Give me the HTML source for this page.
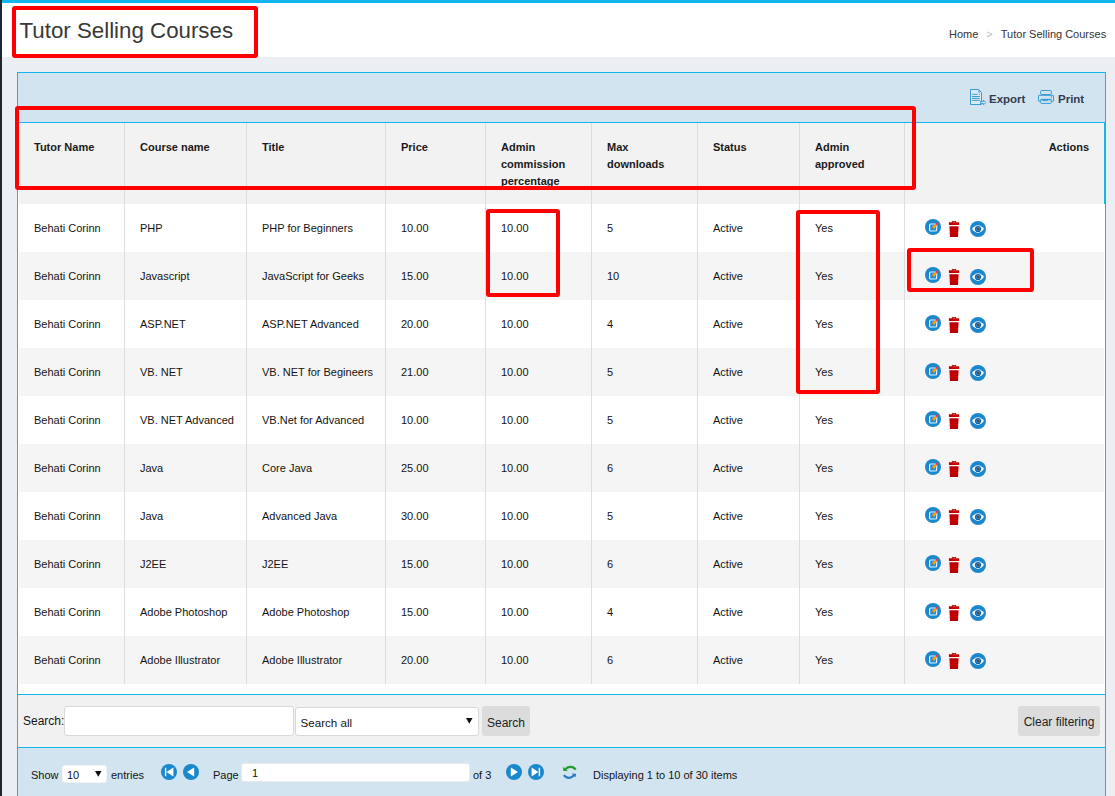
<!DOCTYPE html>
<html><head><meta charset="utf-8">
<style>
*{box-sizing:border-box;margin:0;padding:0}
html,body{width:1115px;height:796px;overflow:hidden}
body{position:relative;background:#ebeef3;font-family:"Liberation Sans",sans-serif;font-size:11px;color:#222}
.abs{position:absolute}
.vsep{width:1px;background:#dddddd}
.th{font-weight:bold;font-size:11px;line-height:17px;color:#1a1a1a;white-space:nowrap}
.td{font-size:11px;line-height:14px;color:#141414;white-space:nowrap}
.tb{font-weight:bold;font-size:11.5px;color:#353b50;line-height:14px;white-space:nowrap}
.inp{position:absolute;background:#fff;border:1px solid #d9d9d9;border-radius:3px}
.btn{position:absolute;background:#dcdcdc;border-radius:3px;font-size:11px;color:#222;text-align:center}
.lbl{position:absolute;font-size:11px;line-height:14px;color:#141414;white-space:nowrap}
.rb{border:4px solid #ff0000;border-radius:3px}

</style></head><body>
<div class="abs" style="left:0;top:0;width:2px;height:796px;background:#1f272c"></div>
<div class="abs" style="left:2px;top:0;width:1113px;height:3px;background:#12b6ec"></div>
<div class="abs" style="left:2px;top:3px;width:1113px;height:54px;background:#fff"></div>
<div class="abs" style="left:19.5px;top:18px;font-size:22.3px;line-height:26px;color:#383838;white-space:nowrap">Tutor Selling Courses</div>
<div class="abs" style="left:949px;top:27px;font-size:11px;line-height:14px;color:#333;white-space:nowrap">Home<span style="color:#bbb;padding:0 8px">&gt;</span>Tutor Selling Courses</div>
<div class="abs" style="left:17px;top:72px;width:1089px;height:724px;border:1px solid #12b6ec;border-bottom:none;background:#d2e4f0"></div>
<svg class="abs" style="left:966px;top:86px" width="24" height="22" viewBox="0 0 24 22"><g fill="none" stroke="#3a9ad6" stroke-width="1"><path d="M4.5 3.5 H12.4 L15.5 6.6 V18.5 H4.5 Z" fill="#dde9f2"/><circle cx="13.4" cy="5.4" r="0.9"/><path d="M6.1 8.3 H11.6 M6.1 10.5 H13.8 M6.1 12.4 H13.8 M6.1 14.4 H13.8"/><path d="M14.5 15.5 H17.5 V14.2 L19.8 16.5 L17.5 18.8 V17.5 H14.5 Z" fill="#dde9f2"/></g><circle cx="13.4" cy="8.3" r="0.6" fill="#3a9ad6"/></svg>
<div class="abs tb" style="left:989px;top:91.5px">Export</div>
<svg class="abs" style="left:1034px;top:86px" width="24" height="22" viewBox="0 0 24 22"><g fill="none" stroke="#3a9ad6" stroke-width="1"><rect x="6.6" y="4.5" width="10.7" height="4" rx="1"/><path d="M6.3 15.3 H5 Q4.5 15.3 4.5 14.8 V9.8 Q4.5 9.3 5 9.3 H19 Q19.5 9.3 19.5 9.8 V14.8 Q19.5 15.3 19 15.3 H17.6"/><rect x="6.6" y="13.4" width="10.7" height="4" rx="1"/><path d="M6.6 13.6 H17.3" stroke-width="1.4"/><path d="M8.5 14.6 H13.8"/></g><circle cx="17.4" cy="11" r="0.8" fill="#3a9ad6"/></svg>
<div class="abs tb" style="left:1058px;top:91.5px">Print</div>
<div class="abs" style="left:18px;top:122px;width:1087px;height:574px;background:#fff;border-top:1px solid #12b6ec"></div>
<div class="abs" style="left:1104px;top:122px;width:1px;height:82px;background:#12b6ec"></div>
<div class="abs" style="left:19px;top:123px;width:1085px;height:81px;background:#f2f2f2"></div>
<div class="abs vsep" style="left:124px;top:123px;height:561px"></div>
<div class="abs vsep" style="left:246px;top:123px;height:561px"></div>
<div class="abs vsep" style="left:385px;top:123px;height:561px"></div>
<div class="abs vsep" style="left:485px;top:123px;height:561px"></div>
<div class="abs vsep" style="left:591px;top:123px;height:561px"></div>
<div class="abs vsep" style="left:697px;top:123px;height:561px"></div>
<div class="abs vsep" style="left:799px;top:123px;height:561px"></div>
<div class="abs vsep" style="left:904px;top:123px;height:561px"></div>
<div class="abs th" style="left:34px;top:138.5px">Tutor Name</div>
<div class="abs th" style="left:140px;top:138.5px">Course name</div>
<div class="abs th" style="left:262px;top:138.5px">Title</div>
<div class="abs th" style="left:401px;top:138.5px">Price</div>
<div class="abs th" style="left:501px;top:138.5px">Admin<br>commission<br>percentage</div>
<div class="abs th" style="left:607px;top:138.5px">Max<br>downloads</div>
<div class="abs th" style="left:713px;top:138.5px">Status</div>
<div class="abs th" style="left:815px;top:138.5px">Admin<br>approved</div>
<div class="abs th" style="right:26px;top:138.5px">Actions</div>
<div class="abs" style="left:19px;top:204px;width:1085px;height:48px;background:#ffffff"></div>
<div class="abs td" style="left:34px;top:221px">Behati Corinn</div>
<div class="abs td" style="left:140px;top:221px">PHP</div>
<div class="abs td" style="left:262px;top:221px">PHP for Beginners</div>
<div class="abs td" style="left:401px;top:221px">10.00</div>
<div class="abs td" style="left:501px;top:221px">10.00</div>
<div class="abs td" style="left:607px;top:221px">5</div>
<div class="abs td" style="left:713px;top:221px">Active</div>
<div class="abs td" style="left:815px;top:221px">Yes</div>
<svg class="abs" style="left:925px;top:219px" width="16" height="16" viewBox="0 0 16 16"><circle cx="8" cy="8" r="8" fill="#1b88cb"/><rect x="4.6" y="5" width="7.1" height="7" rx="1.3" fill="#1f90dd" stroke="#e3f0f9" stroke-width="1.2"/><path d="M7.2 9.6 L11.4 5.4" stroke="#f7a21b" stroke-width="2.3"/><path d="M11.2 5.6 L12.8 4" stroke="#e43a4e" stroke-width="2.3"/><path d="M6.2 10.6 L7.6 8.6 L8.2 9.2 Z" fill="#203040"/></svg>
<svg class="abs" style="left:948px;top:221px" width="12" height="16" viewBox="0 0 12 16"><path d="M4 0 H8 V1.4 H4 Z M5 0.8 V1.3 H7 V0.8 Z" fill="#c00000" fill-rule="evenodd"/><rect x="0.9" y="1.3" width="10.3" height="2.6" rx="0.5" fill="#c00000"/><path d="M1.4 5.2 H10.6 L10 16 H2 Z" fill="#c00000"/></svg>
<svg class="abs" style="left:970px;top:221px" width="16" height="16" viewBox="0 0 16 16"><circle cx="8" cy="8" r="8" fill="#1b88cb"/><path d="M2 8 Q8 0.5 14 8 Q8 15.5 2 8 Z" fill="#fff"/><circle cx="8" cy="8" r="3.1" fill="#17609e"/><circle cx="8" cy="8" r="2" fill="#2a8fd4"/><circle cx="8" cy="7.9" r="1" fill="#5b2c1c"/></svg>
<div class="abs" style="left:19px;top:252px;width:1085px;height:48px;background:#f5f5f5"></div>
<div class="abs td" style="left:34px;top:269px">Behati Corinn</div>
<div class="abs td" style="left:140px;top:269px">Javascript</div>
<div class="abs td" style="left:262px;top:269px">JavaScript for Geeks</div>
<div class="abs td" style="left:401px;top:269px">15.00</div>
<div class="abs td" style="left:501px;top:269px">10.00</div>
<div class="abs td" style="left:607px;top:269px">10</div>
<div class="abs td" style="left:713px;top:269px">Active</div>
<div class="abs td" style="left:815px;top:269px">Yes</div>
<svg class="abs" style="left:925px;top:267px" width="16" height="16" viewBox="0 0 16 16"><circle cx="8" cy="8" r="8" fill="#1b88cb"/><rect x="4.6" y="5" width="7.1" height="7" rx="1.3" fill="#1f90dd" stroke="#e3f0f9" stroke-width="1.2"/><path d="M7.2 9.6 L11.4 5.4" stroke="#f7a21b" stroke-width="2.3"/><path d="M11.2 5.6 L12.8 4" stroke="#e43a4e" stroke-width="2.3"/><path d="M6.2 10.6 L7.6 8.6 L8.2 9.2 Z" fill="#203040"/></svg>
<svg class="abs" style="left:948px;top:269px" width="12" height="16" viewBox="0 0 12 16"><path d="M4 0 H8 V1.4 H4 Z M5 0.8 V1.3 H7 V0.8 Z" fill="#c00000" fill-rule="evenodd"/><rect x="0.9" y="1.3" width="10.3" height="2.6" rx="0.5" fill="#c00000"/><path d="M1.4 5.2 H10.6 L10 16 H2 Z" fill="#c00000"/></svg>
<svg class="abs" style="left:970px;top:269px" width="16" height="16" viewBox="0 0 16 16"><circle cx="8" cy="8" r="8" fill="#1b88cb"/><path d="M2 8 Q8 0.5 14 8 Q8 15.5 2 8 Z" fill="#fff"/><circle cx="8" cy="8" r="3.1" fill="#17609e"/><circle cx="8" cy="8" r="2" fill="#2a8fd4"/><circle cx="8" cy="7.9" r="1" fill="#5b2c1c"/></svg>
<div class="abs" style="left:19px;top:300px;width:1085px;height:48px;background:#ffffff"></div>
<div class="abs td" style="left:34px;top:317px">Behati Corinn</div>
<div class="abs td" style="left:140px;top:317px">ASP.NET</div>
<div class="abs td" style="left:262px;top:317px">ASP.NET Advanced</div>
<div class="abs td" style="left:401px;top:317px">20.00</div>
<div class="abs td" style="left:501px;top:317px">10.00</div>
<div class="abs td" style="left:607px;top:317px">4</div>
<div class="abs td" style="left:713px;top:317px">Active</div>
<div class="abs td" style="left:815px;top:317px">Yes</div>
<svg class="abs" style="left:925px;top:315px" width="16" height="16" viewBox="0 0 16 16"><circle cx="8" cy="8" r="8" fill="#1b88cb"/><rect x="4.6" y="5" width="7.1" height="7" rx="1.3" fill="#1f90dd" stroke="#e3f0f9" stroke-width="1.2"/><path d="M7.2 9.6 L11.4 5.4" stroke="#f7a21b" stroke-width="2.3"/><path d="M11.2 5.6 L12.8 4" stroke="#e43a4e" stroke-width="2.3"/><path d="M6.2 10.6 L7.6 8.6 L8.2 9.2 Z" fill="#203040"/></svg>
<svg class="abs" style="left:948px;top:317px" width="12" height="16" viewBox="0 0 12 16"><path d="M4 0 H8 V1.4 H4 Z M5 0.8 V1.3 H7 V0.8 Z" fill="#c00000" fill-rule="evenodd"/><rect x="0.9" y="1.3" width="10.3" height="2.6" rx="0.5" fill="#c00000"/><path d="M1.4 5.2 H10.6 L10 16 H2 Z" fill="#c00000"/></svg>
<svg class="abs" style="left:970px;top:317px" width="16" height="16" viewBox="0 0 16 16"><circle cx="8" cy="8" r="8" fill="#1b88cb"/><path d="M2 8 Q8 0.5 14 8 Q8 15.5 2 8 Z" fill="#fff"/><circle cx="8" cy="8" r="3.1" fill="#17609e"/><circle cx="8" cy="8" r="2" fill="#2a8fd4"/><circle cx="8" cy="7.9" r="1" fill="#5b2c1c"/></svg>
<div class="abs" style="left:19px;top:348px;width:1085px;height:48px;background:#f5f5f5"></div>
<div class="abs td" style="left:34px;top:365px">Behati Corinn</div>
<div class="abs td" style="left:140px;top:365px">VB. NET</div>
<div class="abs td" style="left:262px;top:365px">VB. NET for Begineers</div>
<div class="abs td" style="left:401px;top:365px">21.00</div>
<div class="abs td" style="left:501px;top:365px">10.00</div>
<div class="abs td" style="left:607px;top:365px">5</div>
<div class="abs td" style="left:713px;top:365px">Active</div>
<div class="abs td" style="left:815px;top:365px">Yes</div>
<svg class="abs" style="left:925px;top:363px" width="16" height="16" viewBox="0 0 16 16"><circle cx="8" cy="8" r="8" fill="#1b88cb"/><rect x="4.6" y="5" width="7.1" height="7" rx="1.3" fill="#1f90dd" stroke="#e3f0f9" stroke-width="1.2"/><path d="M7.2 9.6 L11.4 5.4" stroke="#f7a21b" stroke-width="2.3"/><path d="M11.2 5.6 L12.8 4" stroke="#e43a4e" stroke-width="2.3"/><path d="M6.2 10.6 L7.6 8.6 L8.2 9.2 Z" fill="#203040"/></svg>
<svg class="abs" style="left:948px;top:365px" width="12" height="16" viewBox="0 0 12 16"><path d="M4 0 H8 V1.4 H4 Z M5 0.8 V1.3 H7 V0.8 Z" fill="#c00000" fill-rule="evenodd"/><rect x="0.9" y="1.3" width="10.3" height="2.6" rx="0.5" fill="#c00000"/><path d="M1.4 5.2 H10.6 L10 16 H2 Z" fill="#c00000"/></svg>
<svg class="abs" style="left:970px;top:365px" width="16" height="16" viewBox="0 0 16 16"><circle cx="8" cy="8" r="8" fill="#1b88cb"/><path d="M2 8 Q8 0.5 14 8 Q8 15.5 2 8 Z" fill="#fff"/><circle cx="8" cy="8" r="3.1" fill="#17609e"/><circle cx="8" cy="8" r="2" fill="#2a8fd4"/><circle cx="8" cy="7.9" r="1" fill="#5b2c1c"/></svg>
<div class="abs" style="left:19px;top:396px;width:1085px;height:48px;background:#ffffff"></div>
<div class="abs td" style="left:34px;top:413px">Behati Corinn</div>
<div class="abs td" style="left:140px;top:413px">VB. NET Advanced</div>
<div class="abs td" style="left:262px;top:413px">VB.Net for Advanced</div>
<div class="abs td" style="left:401px;top:413px">10.00</div>
<div class="abs td" style="left:501px;top:413px">10.00</div>
<div class="abs td" style="left:607px;top:413px">5</div>
<div class="abs td" style="left:713px;top:413px">Active</div>
<div class="abs td" style="left:815px;top:413px">Yes</div>
<svg class="abs" style="left:925px;top:411px" width="16" height="16" viewBox="0 0 16 16"><circle cx="8" cy="8" r="8" fill="#1b88cb"/><rect x="4.6" y="5" width="7.1" height="7" rx="1.3" fill="#1f90dd" stroke="#e3f0f9" stroke-width="1.2"/><path d="M7.2 9.6 L11.4 5.4" stroke="#f7a21b" stroke-width="2.3"/><path d="M11.2 5.6 L12.8 4" stroke="#e43a4e" stroke-width="2.3"/><path d="M6.2 10.6 L7.6 8.6 L8.2 9.2 Z" fill="#203040"/></svg>
<svg class="abs" style="left:948px;top:413px" width="12" height="16" viewBox="0 0 12 16"><path d="M4 0 H8 V1.4 H4 Z M5 0.8 V1.3 H7 V0.8 Z" fill="#c00000" fill-rule="evenodd"/><rect x="0.9" y="1.3" width="10.3" height="2.6" rx="0.5" fill="#c00000"/><path d="M1.4 5.2 H10.6 L10 16 H2 Z" fill="#c00000"/></svg>
<svg class="abs" style="left:970px;top:413px" width="16" height="16" viewBox="0 0 16 16"><circle cx="8" cy="8" r="8" fill="#1b88cb"/><path d="M2 8 Q8 0.5 14 8 Q8 15.5 2 8 Z" fill="#fff"/><circle cx="8" cy="8" r="3.1" fill="#17609e"/><circle cx="8" cy="8" r="2" fill="#2a8fd4"/><circle cx="8" cy="7.9" r="1" fill="#5b2c1c"/></svg>
<div class="abs" style="left:19px;top:444px;width:1085px;height:48px;background:#f5f5f5"></div>
<div class="abs td" style="left:34px;top:461px">Behati Corinn</div>
<div class="abs td" style="left:140px;top:461px">Java</div>
<div class="abs td" style="left:262px;top:461px">Core Java</div>
<div class="abs td" style="left:401px;top:461px">25.00</div>
<div class="abs td" style="left:501px;top:461px">10.00</div>
<div class="abs td" style="left:607px;top:461px">6</div>
<div class="abs td" style="left:713px;top:461px">Active</div>
<div class="abs td" style="left:815px;top:461px">Yes</div>
<svg class="abs" style="left:925px;top:459px" width="16" height="16" viewBox="0 0 16 16"><circle cx="8" cy="8" r="8" fill="#1b88cb"/><rect x="4.6" y="5" width="7.1" height="7" rx="1.3" fill="#1f90dd" stroke="#e3f0f9" stroke-width="1.2"/><path d="M7.2 9.6 L11.4 5.4" stroke="#f7a21b" stroke-width="2.3"/><path d="M11.2 5.6 L12.8 4" stroke="#e43a4e" stroke-width="2.3"/><path d="M6.2 10.6 L7.6 8.6 L8.2 9.2 Z" fill="#203040"/></svg>
<svg class="abs" style="left:948px;top:461px" width="12" height="16" viewBox="0 0 12 16"><path d="M4 0 H8 V1.4 H4 Z M5 0.8 V1.3 H7 V0.8 Z" fill="#c00000" fill-rule="evenodd"/><rect x="0.9" y="1.3" width="10.3" height="2.6" rx="0.5" fill="#c00000"/><path d="M1.4 5.2 H10.6 L10 16 H2 Z" fill="#c00000"/></svg>
<svg class="abs" style="left:970px;top:461px" width="16" height="16" viewBox="0 0 16 16"><circle cx="8" cy="8" r="8" fill="#1b88cb"/><path d="M2 8 Q8 0.5 14 8 Q8 15.5 2 8 Z" fill="#fff"/><circle cx="8" cy="8" r="3.1" fill="#17609e"/><circle cx="8" cy="8" r="2" fill="#2a8fd4"/><circle cx="8" cy="7.9" r="1" fill="#5b2c1c"/></svg>
<div class="abs" style="left:19px;top:492px;width:1085px;height:48px;background:#ffffff"></div>
<div class="abs td" style="left:34px;top:509px">Behati Corinn</div>
<div class="abs td" style="left:140px;top:509px">Java</div>
<div class="abs td" style="left:262px;top:509px">Advanced Java</div>
<div class="abs td" style="left:401px;top:509px">30.00</div>
<div class="abs td" style="left:501px;top:509px">10.00</div>
<div class="abs td" style="left:607px;top:509px">5</div>
<div class="abs td" style="left:713px;top:509px">Active</div>
<div class="abs td" style="left:815px;top:509px">Yes</div>
<svg class="abs" style="left:925px;top:507px" width="16" height="16" viewBox="0 0 16 16"><circle cx="8" cy="8" r="8" fill="#1b88cb"/><rect x="4.6" y="5" width="7.1" height="7" rx="1.3" fill="#1f90dd" stroke="#e3f0f9" stroke-width="1.2"/><path d="M7.2 9.6 L11.4 5.4" stroke="#f7a21b" stroke-width="2.3"/><path d="M11.2 5.6 L12.8 4" stroke="#e43a4e" stroke-width="2.3"/><path d="M6.2 10.6 L7.6 8.6 L8.2 9.2 Z" fill="#203040"/></svg>
<svg class="abs" style="left:948px;top:509px" width="12" height="16" viewBox="0 0 12 16"><path d="M4 0 H8 V1.4 H4 Z M5 0.8 V1.3 H7 V0.8 Z" fill="#c00000" fill-rule="evenodd"/><rect x="0.9" y="1.3" width="10.3" height="2.6" rx="0.5" fill="#c00000"/><path d="M1.4 5.2 H10.6 L10 16 H2 Z" fill="#c00000"/></svg>
<svg class="abs" style="left:970px;top:509px" width="16" height="16" viewBox="0 0 16 16"><circle cx="8" cy="8" r="8" fill="#1b88cb"/><path d="M2 8 Q8 0.5 14 8 Q8 15.5 2 8 Z" fill="#fff"/><circle cx="8" cy="8" r="3.1" fill="#17609e"/><circle cx="8" cy="8" r="2" fill="#2a8fd4"/><circle cx="8" cy="7.9" r="1" fill="#5b2c1c"/></svg>
<div class="abs" style="left:19px;top:540px;width:1085px;height:48px;background:#f5f5f5"></div>
<div class="abs td" style="left:34px;top:557px">Behati Corinn</div>
<div class="abs td" style="left:140px;top:557px">J2EE</div>
<div class="abs td" style="left:262px;top:557px">J2EE</div>
<div class="abs td" style="left:401px;top:557px">15.00</div>
<div class="abs td" style="left:501px;top:557px">10.00</div>
<div class="abs td" style="left:607px;top:557px">6</div>
<div class="abs td" style="left:713px;top:557px">Active</div>
<div class="abs td" style="left:815px;top:557px">Yes</div>
<svg class="abs" style="left:925px;top:555px" width="16" height="16" viewBox="0 0 16 16"><circle cx="8" cy="8" r="8" fill="#1b88cb"/><rect x="4.6" y="5" width="7.1" height="7" rx="1.3" fill="#1f90dd" stroke="#e3f0f9" stroke-width="1.2"/><path d="M7.2 9.6 L11.4 5.4" stroke="#f7a21b" stroke-width="2.3"/><path d="M11.2 5.6 L12.8 4" stroke="#e43a4e" stroke-width="2.3"/><path d="M6.2 10.6 L7.6 8.6 L8.2 9.2 Z" fill="#203040"/></svg>
<svg class="abs" style="left:948px;top:557px" width="12" height="16" viewBox="0 0 12 16"><path d="M4 0 H8 V1.4 H4 Z M5 0.8 V1.3 H7 V0.8 Z" fill="#c00000" fill-rule="evenodd"/><rect x="0.9" y="1.3" width="10.3" height="2.6" rx="0.5" fill="#c00000"/><path d="M1.4 5.2 H10.6 L10 16 H2 Z" fill="#c00000"/></svg>
<svg class="abs" style="left:970px;top:557px" width="16" height="16" viewBox="0 0 16 16"><circle cx="8" cy="8" r="8" fill="#1b88cb"/><path d="M2 8 Q8 0.5 14 8 Q8 15.5 2 8 Z" fill="#fff"/><circle cx="8" cy="8" r="3.1" fill="#17609e"/><circle cx="8" cy="8" r="2" fill="#2a8fd4"/><circle cx="8" cy="7.9" r="1" fill="#5b2c1c"/></svg>
<div class="abs" style="left:19px;top:588px;width:1085px;height:48px;background:#ffffff"></div>
<div class="abs td" style="left:34px;top:605px">Behati Corinn</div>
<div class="abs td" style="left:140px;top:605px">Adobe Photoshop</div>
<div class="abs td" style="left:262px;top:605px">Adobe Photoshop</div>
<div class="abs td" style="left:401px;top:605px">15.00</div>
<div class="abs td" style="left:501px;top:605px">10.00</div>
<div class="abs td" style="left:607px;top:605px">4</div>
<div class="abs td" style="left:713px;top:605px">Active</div>
<div class="abs td" style="left:815px;top:605px">Yes</div>
<svg class="abs" style="left:925px;top:603px" width="16" height="16" viewBox="0 0 16 16"><circle cx="8" cy="8" r="8" fill="#1b88cb"/><rect x="4.6" y="5" width="7.1" height="7" rx="1.3" fill="#1f90dd" stroke="#e3f0f9" stroke-width="1.2"/><path d="M7.2 9.6 L11.4 5.4" stroke="#f7a21b" stroke-width="2.3"/><path d="M11.2 5.6 L12.8 4" stroke="#e43a4e" stroke-width="2.3"/><path d="M6.2 10.6 L7.6 8.6 L8.2 9.2 Z" fill="#203040"/></svg>
<svg class="abs" style="left:948px;top:605px" width="12" height="16" viewBox="0 0 12 16"><path d="M4 0 H8 V1.4 H4 Z M5 0.8 V1.3 H7 V0.8 Z" fill="#c00000" fill-rule="evenodd"/><rect x="0.9" y="1.3" width="10.3" height="2.6" rx="0.5" fill="#c00000"/><path d="M1.4 5.2 H10.6 L10 16 H2 Z" fill="#c00000"/></svg>
<svg class="abs" style="left:970px;top:605px" width="16" height="16" viewBox="0 0 16 16"><circle cx="8" cy="8" r="8" fill="#1b88cb"/><path d="M2 8 Q8 0.5 14 8 Q8 15.5 2 8 Z" fill="#fff"/><circle cx="8" cy="8" r="3.1" fill="#17609e"/><circle cx="8" cy="8" r="2" fill="#2a8fd4"/><circle cx="8" cy="7.9" r="1" fill="#5b2c1c"/></svg>
<div class="abs" style="left:19px;top:636px;width:1085px;height:48px;background:#f5f5f5"></div>
<div class="abs td" style="left:34px;top:653px">Behati Corinn</div>
<div class="abs td" style="left:140px;top:653px">Adobe Illustrator</div>
<div class="abs td" style="left:262px;top:653px">Adobe Illustrator</div>
<div class="abs td" style="left:401px;top:653px">20.00</div>
<div class="abs td" style="left:501px;top:653px">10.00</div>
<div class="abs td" style="left:607px;top:653px">6</div>
<div class="abs td" style="left:713px;top:653px">Active</div>
<div class="abs td" style="left:815px;top:653px">Yes</div>
<svg class="abs" style="left:925px;top:651px" width="16" height="16" viewBox="0 0 16 16"><circle cx="8" cy="8" r="8" fill="#1b88cb"/><rect x="4.6" y="5" width="7.1" height="7" rx="1.3" fill="#1f90dd" stroke="#e3f0f9" stroke-width="1.2"/><path d="M7.2 9.6 L11.4 5.4" stroke="#f7a21b" stroke-width="2.3"/><path d="M11.2 5.6 L12.8 4" stroke="#e43a4e" stroke-width="2.3"/><path d="M6.2 10.6 L7.6 8.6 L8.2 9.2 Z" fill="#203040"/></svg>
<svg class="abs" style="left:948px;top:653px" width="12" height="16" viewBox="0 0 12 16"><path d="M4 0 H8 V1.4 H4 Z M5 0.8 V1.3 H7 V0.8 Z" fill="#c00000" fill-rule="evenodd"/><rect x="0.9" y="1.3" width="10.3" height="2.6" rx="0.5" fill="#c00000"/><path d="M1.4 5.2 H10.6 L10 16 H2 Z" fill="#c00000"/></svg>
<svg class="abs" style="left:970px;top:653px" width="16" height="16" viewBox="0 0 16 16"><circle cx="8" cy="8" r="8" fill="#1b88cb"/><path d="M2 8 Q8 0.5 14 8 Q8 15.5 2 8 Z" fill="#fff"/><circle cx="8" cy="8" r="3.1" fill="#17609e"/><circle cx="8" cy="8" r="2" fill="#2a8fd4"/><circle cx="8" cy="7.9" r="1" fill="#5b2c1c"/></svg>
<div class="abs vsep" style="left:124px;top:123px;height:561px"></div>
<div class="abs vsep" style="left:246px;top:123px;height:561px"></div>
<div class="abs vsep" style="left:385px;top:123px;height:561px"></div>
<div class="abs vsep" style="left:485px;top:123px;height:561px"></div>
<div class="abs vsep" style="left:591px;top:123px;height:561px"></div>
<div class="abs vsep" style="left:697px;top:123px;height:561px"></div>
<div class="abs vsep" style="left:799px;top:123px;height:561px"></div>
<div class="abs vsep" style="left:904px;top:123px;height:561px"></div>
<div class="abs" style="left:18px;top:694px;width:1087px;height:54px;background:#f1f1f1;border-top:1px solid #12b6ec;border-bottom:1px solid #12b6ec"></div>
<div class="lbl" style="left:23px;top:713.5px;font-size:12px">Search:</div>
<div class="inp" style="left:63.5px;top:706px;width:230px;height:29.5px"></div>
<div class="inp" style="left:295px;top:706.5px;width:184px;height:29px"></div>
<div class="lbl" style="left:300.5px;top:715.8px;font-size:11.6px">Search all</div>
<svg class="abs" style="left:466px;top:718px" width="7" height="6" viewBox="0 0 7 6"><path d="M0 0 H6.5 L3.25 5.8 Z" fill="#111"/></svg>
<div class="btn" style="left:482px;top:706px;width:48px;height:29.5px;line-height:14px;padding-top:10px;font-size:12px">Search</div>
<div class="btn" style="left:1018px;top:706px;width:82px;height:30px;line-height:14px;padding-top:9px;font-size:12px">Clear filtering</div>
<div class="abs" style="left:18px;top:748px;width:1087px;height:48px;background:#d2e4f0"></div>
<div class="lbl" style="left:31px;top:768px">Show</div>
<div class="inp" style="left:62px;top:765px;width:45px;height:18px;border-color:#f4f4f4"></div>
<div class="lbl" style="left:67px;top:768px">10</div>
<svg class="abs" style="left:95px;top:771px" width="7" height="6" viewBox="0 0 7 6"><path d="M0 0 H6.5 L3.25 5.8 Z" fill="#111"/></svg>
<div class="lbl" style="left:111px;top:768px">entries</div>
<svg class="abs" style="left:161px;top:764px" width="16" height="16" viewBox="0 0 16 16"><circle cx="8" cy="8" r="8" fill="#1b88cb"/><rect x="3.9" y="3.8" width="1.4" height="8.4" fill="#fff"/><path d="M12.4 3.6 V12.4 L5.6 8 Z" fill="#fff"/></svg>
<svg class="abs" style="left:183px;top:764px" width="16" height="16" viewBox="0 0 16 16"><circle cx="8" cy="8" r="8" fill="#1b88cb"/><path d="M11.2 3.6 V12.4 L4 8 Z" fill="#fff"/></svg>
<div class="lbl" style="left:213px;top:768px">Page</div>
<div class="inp" style="left:240.5px;top:762.5px;width:229px;height:19px;border-color:#eaeaea"></div>
<div class="lbl" style="left:252px;top:766px">1</div>
<div class="lbl" style="left:473px;top:768px">of 3</div>
<svg class="abs" style="left:506px;top:764px" width="16" height="16" viewBox="0 0 16 16"><circle cx="8" cy="8" r="8" fill="#1b88cb"/><path d="M4.8 3.6 V12.4 L12 8 Z" fill="#fff"/></svg>
<svg class="abs" style="left:528px;top:764px" width="16" height="16" viewBox="0 0 16 16"><circle cx="8" cy="8" r="8" fill="#1b88cb"/><path d="M3.6 3.6 V12.4 L10.4 8 Z" fill="#fff"/><rect x="10.7" y="3.8" width="1.4" height="8.4" fill="#fff"/></svg>
<svg class="abs" style="left:558px;top:760px" width="24" height="24" viewBox="0 0 24 24"><path d="M17.6 9.6 A6.2 6.2 0 0 0 7.4 9.4" fill="none" stroke="#269c2a" stroke-width="2.2"/><path d="M5.4 6.8 L5.0 10.8 L9.8 11.2 Z" fill="#269c2a"/><path d="M5.8 15.2 A6.2 6.2 0 0 0 16.2 14.8" fill="none" stroke="#2a7cc6" stroke-width="2.2"/><path d="M13.8 13.4 L18.2 13.8 L17.4 17.6 Z" fill="#2a7cc6"/></svg>
<div class="lbl" style="left:593px;top:768px">Displaying 1 to 10 of 30 items</div>
<div class="abs rb" style="left:12px;top:6px;width:246px;height:52px"></div>
<div class="abs rb" style="left:15px;top:106px;width:901px;height:84px"></div>
<div class="abs rb" style="left:486px;top:209px;width:74px;height:88px"></div>
<div class="abs rb" style="left:796px;top:210px;width:84px;height:184px"></div>
<div class="abs rb" style="left:907px;top:248px;width:127px;height:44px"></div>
</body></html>
